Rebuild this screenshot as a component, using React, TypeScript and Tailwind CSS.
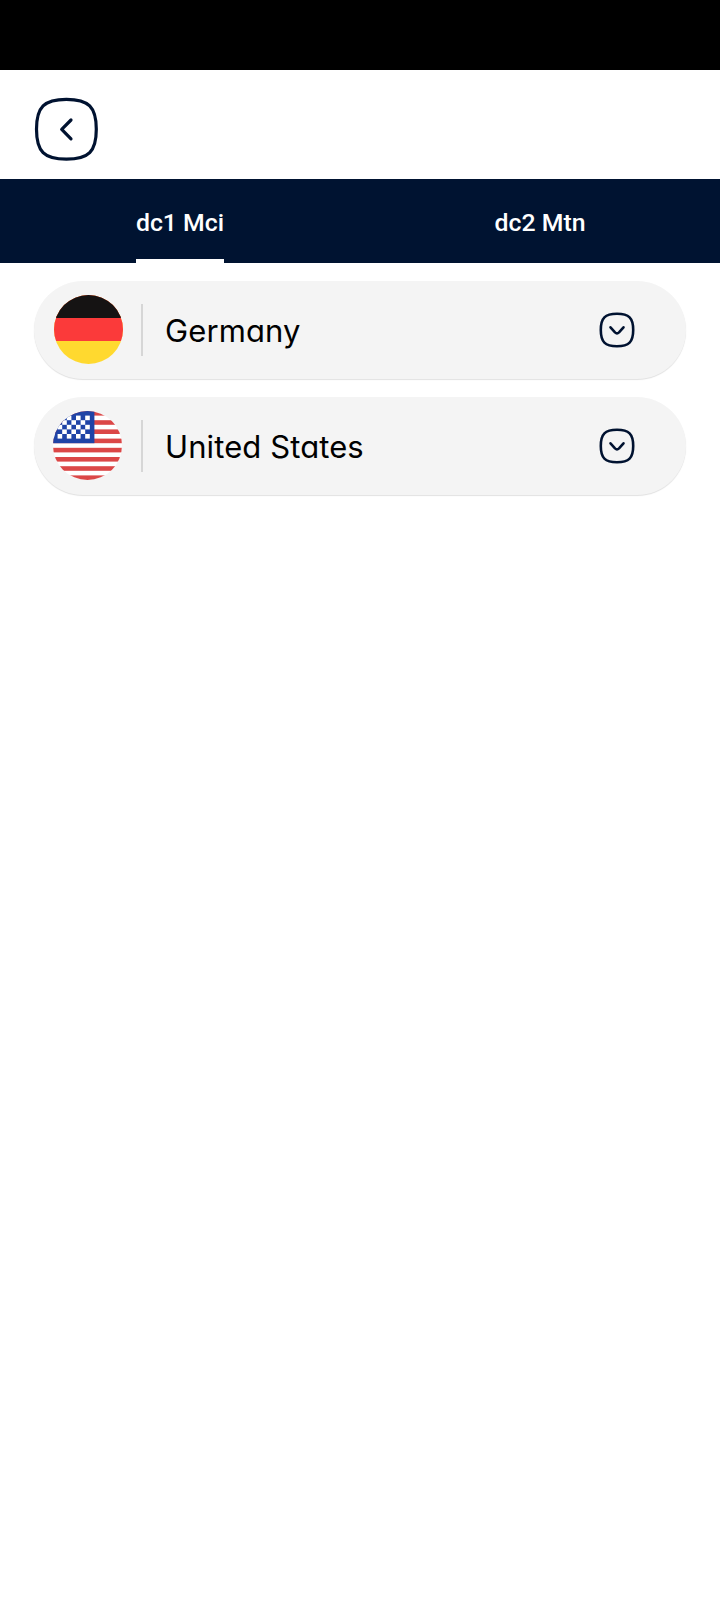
import { useState } from "react"

interface Country {
  name: string
  flag: "de" | "us"
}

const tabs = ["dc1 Mci", "dc2 Mtn"]

const countries: Country[] = [
  { name: "Germany", flag: "de" },
  { name: "United States", flag: "us" },
]

const stripes = [0, 2, 4, 6, 8, 10, 12, 14]

// [column, row] of the white squares inside the blue canton
const stars = [
  [1, 1], [3, 1], [5, 1], [7, 1],
  [2, 2], [4, 2], [6, 2],
  [1, 3], [3, 3], [5, 3], [7, 3],
  [2, 4], [4, 4], [6, 4],
  [1, 5], [3, 5], [5, 5], [7, 5],
]

function BackIcon() {
  return (
    <svg className="h-16 w-16" viewBox="0 0 64 64" fill="none" stroke="#001230" strokeWidth="3.2" strokeLinecap="round" strokeLinejoin="round">
      <path d="M32.4 2.4C54.7 2.4 62.3 10 62.3 32.3S54.7 62.2 32.4 62.2 2.5 54.6 2.5 32.3 10.1 2.4 32.4 2.4Z" />
      <path d="M37 23 27.7 32.4 37 41.8" strokeWidth="3.2" />
    </svg>
  )
}

function ChevronIcon() {
  return (
    <svg className="h-9 w-9" viewBox="0 0 36 36" fill="none" stroke="#001230" strokeWidth="2.6" strokeLinecap="round" strokeLinejoin="round">
      <path d="M18 1.8C30 1.8 34.2 6 34.2 18S30 34.2 18 34.2 1.8 30 1.8 18 6 1.8 18 1.8Z" />
      <path d="M11.5 15.3 16 20.3Q18 22.3 20 20.3L24.5 15.3" />
    </svg>
  )
}

function GermanFlag() {
  return (
    <svg className="mb-px ml-5 h-[69px] w-[69px] rounded-full" viewBox="0 0 3 3">
      <rect width="3" height="3" fill="#ffd92f" />
      <rect width="3" height="2" fill="#fb3a3a" />
      <rect width="3" height="1" fill="#151313" />
    </svg>
  )
}

function AmericanFlag() {
  return (
    <svg className="mb-px ml-[19px] mr-px h-[69px] w-[69px] rounded-full" viewBox="0 0 15 15">
      <rect width="15" height="15" fill="#ffffff" />
      {stripes.map((y) => (
        <rect key={y} y={y} width="15" height="1" fill="#db4747" />
      ))}
      <rect width="9" height="7" fill="#1f43a6" />
      {stars.map(([x, y]) => (
        <rect key={`${x}-${y}`} x={x} y={y} width="1" height="1" fill="#ffffff" />
      ))}
    </svg>
  )
}

function CountryRow({ name, flag }: Country) {
  return (
    <button
      type="button"
      className="flex h-[98px] w-full items-center rounded-full bg-[#f4f4f4] text-left shadow-[0_1px_1px_rgba(0,0,0,0.12)]"
    >
      {flag === "de" ? <GermanFlag /> : <AmericanFlag />}
      <span className="ml-[18px] h-[52px] w-[2px] bg-[#d6d6d6]" />
      <span className="ml-[22px] flex-1 font-['Inter',sans-serif] text-[31px] leading-none tracking-[0.1px] text-black [font-feature-settings:'cv11'_1]">
        {name}
      </span>
      <span className="mr-[51px]">
        <ChevronIcon />
      </span>
    </button>
  )
}

function App() {
  const [active, setActive] = useState(0)

  return (
    <div className="flex min-h-screen flex-col bg-white">
      <div className="h-[70px] bg-black" />

      <header className="flex h-[109px] items-center px-[34px] pt-2">
        <button type="button" aria-label="Back">
          <BackIcon />
        </button>
      </header>

      <nav className="grid h-[84px] grid-cols-2 bg-[#001331]">
        {tabs.map((tab, i) => (
          <button
            key={tab}
            type="button"
            onClick={() => setActive(i)}
            className="flex justify-center font-['Roboto',sans-serif] text-[24.8px] font-medium text-white"
          >
            <span className={i === active ? "flex h-full items-center border-b-4 border-white pt-2" : "flex h-full items-center border-b-4 border-transparent pt-2"}>
              {tab}
            </span>
          </button>
        ))}
      </nav>

      <main className="flex flex-col gap-[18px] px-[34px] pt-[18px]">
        {countries.map((country) => (
          <CountryRow key={country.name} {...country} />
        ))}
      </main>
    </div>
  )
}

export default App
